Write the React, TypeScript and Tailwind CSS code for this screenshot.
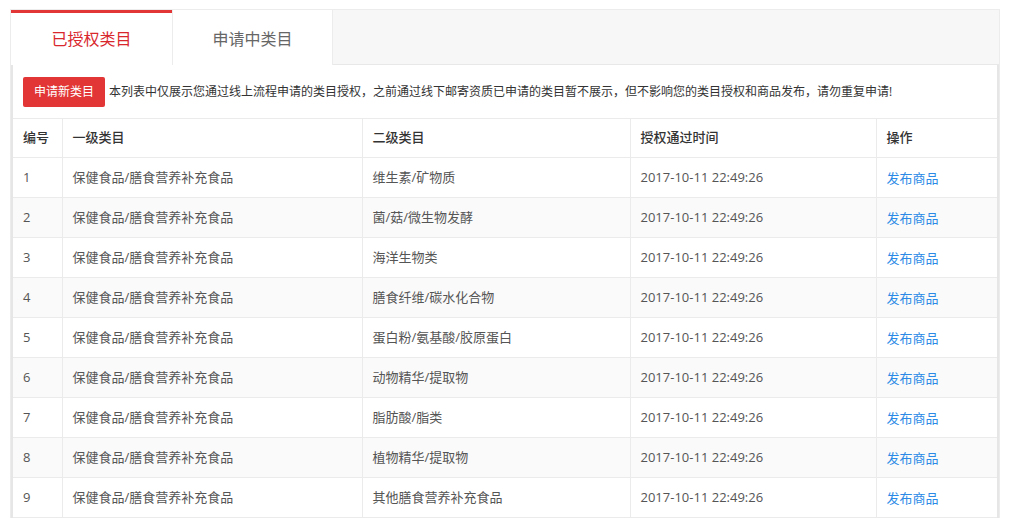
import React from "react";

const rows = [
  "维生素/矿物质",
  "菌/菇/微生物发酵",
  "海洋生物类",
  "膳食纤维/碳水化合物",
  "蛋白粉/氨基酸/胶原蛋白",
  "动物精华/提取物",
  "脂肪酸/脂类",
  "植物精华/提取物",
  "其他膳食营养补充食品",
];

export default function App() {
  return (
    <div
      className="min-h-[518px] bg-white pl-[10px] pt-[9px]"
      style={{ fontFamily: '"Open Sans", "Noto Sans CJK SC", sans-serif' }}
    >
      <div className="w-[990px] border border-[#ececec] bg-[#f7f7f7]">
        {/* tabs */}
        <div className="flex h-[55px] border-b border-[#e8e8e8]">
          <div className="-mb-px flex w-[161px] items-center justify-center border-t-[3px] border-[#e23535] bg-white pb-[1px] text-[16px] text-[#d9272e]">
            已授权类目
          </div>
          <div className="-mb-px flex w-[161px] items-center justify-center border-x border-[#ececec] bg-white pt-[2px] text-[16px] text-[#666]">
            申请中类目
          </div>
        </div>

        <div className="border-x-2 border-[#e6e6e6] bg-white">
          <div className="flex h-[53px] items-center gap-[4px] pl-[10px]">
            <button className="h-[30px] rounded-[2px] bg-[#e23535] px-[11px] text-[12px] text-white">
              申请新类目
            </button>
            <span className="text-[12px] text-[#333]">
              本列表中仅展示您通过线上流程申请的类目授权，之前通过线下邮寄资质已申请的类目暂不展示，但不影响您的类目授权和商品发布，请勿重复申请!
            </span>
          </div>

          <table className="w-full border-collapse text-left text-[13px]">
            <thead>
              <tr className="h-[39px] border-y border-[#ebebeb] text-[#333]">
                <th className="w-[49px] pl-[10px] font-medium">编号</th>
                <th className="w-[300px] border-l border-[#ebebeb] pl-[10px] font-medium">一级类目</th>
                <th className="w-[268px] border-l border-[#ebebeb] pl-[10px] font-medium">二级类目</th>
                <th className="w-[246px] border-l border-[#ebebeb] pl-[10px] font-medium">授权通过时间</th>
                <th className="border-l border-[#ebebeb] pl-[10px] font-medium">操作</th>
              </tr>
            </thead>
            <tbody className="text-[#555]">
              {rows.map((r, i) => (
                <tr
                  key={r}
                  className={`h-[40px] border-b border-[#ebebeb] ${i % 2 === 1 ? "bg-[#fafafa]" : "bg-white"}`}
                >
                  <td className="pl-[10px]">{i + 1}</td>
                  <td className="border-l border-[#ebebeb] pl-[10px]">保健食品/膳食营养补充食品</td>
                  <td className="border-l border-[#ebebeb] pl-[10px]">{r}</td>
                  <td className="border-l border-[#ebebeb] pl-[10px]">2017-10-11 22:49:26</td>
                  <td className="border-l border-[#ebebeb] pl-[10px] pt-[2px]">
                    <a href="#" className="text-[#2b8ae6]">
                      发布商品
                    </a>
                  </td>
                </tr>
              ))}
            </tbody>
          </table>
        </div>
      </div>
    </div>
  );
}
